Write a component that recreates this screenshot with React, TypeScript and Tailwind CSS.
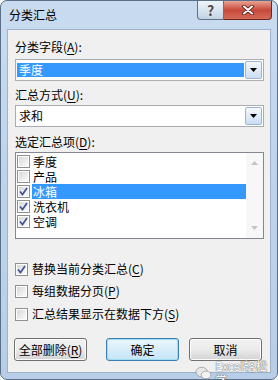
import React from 'react';

const font = "font-['Noto_Sans_CJK_SC',sans-serif]";

function U({ children }: { children: React.ReactNode }) {
  return <span className="underline underline-offset-2">{children}</span>;
}

function CheckBox({ checked }: { checked?: boolean }) {
  return (
    <div className="w-[13px] h-[13px] border border-[#8e8f8f] bg-white p-[1px] flex-shrink-0">
      <div className="w-full h-full bg-gradient-to-br from-[#d8d8d8] to-[#fbfbfb] flex items-center justify-center">
        {checked && (
          <svg width="9" height="9" viewBox="0 0 9 9">
            <path d="M1 4.5 L3.5 7.5 L8 1" fill="none" stroke="#3f5795" strokeWidth="1.7" />
          </svg>
        )}
      </div>
    </div>
  );
}

function DropButton() {
  return (
    <div className="w-[17px] h-full border border-[#9fb4cf] rounded-[2px] bg-gradient-to-b from-[#f4f8fc] to-[#c9def3] flex items-center justify-center">
      <svg width="7" height="4" viewBox="0 0 7 4">
        <path d="M0 0 H7 L3.5 4 Z" fill="#000" />
      </svg>
    </div>
  );
}

function Combo({ value, selected }: { value: string; selected?: boolean }) {
  return (
    <div className="h-[22px] border border-[#abadb3] bg-white flex items-stretch p-[1px]">
      <div className="flex-1 flex items-center pr-[1px] py-[2px]">
        <div className={`w-full h-full flex items-center pl-[2px] ${selected ? 'bg-[#3399ff] text-white' : 'text-black'}`}>
          {value}
        </div>
      </div>
      <DropButton />
    </div>
  );
}

const items = [
  { label: '季度', checked: false },
  { label: '产品', checked: false },
  { label: '冰箱', checked: true, active: true },
  { label: '洗衣机', checked: true },
  { label: '空调', checked: true },
];

function Btn({ children, focused }: { children: React.ReactNode; focused?: boolean }) {
  return (
    <div
      className={`w-[73px] h-[23px] rounded-[3px] border flex items-center justify-center ${
        focused
          ? 'border-[#3c7fb1] bg-gradient-to-b from-[#eaf6fd] to-[#c6e4f6] shadow-[inset_0_0_0_1px_#9fdcf8]'
          : 'border-[#707070] bg-gradient-to-b from-[#f2f2f2] via-[#ebebeb] to-[#d3d3d3] shadow-[inset_0_0_0_1px_#fcfcfc]'
      }`}
    >
      {children}
    </div>
  );
}

export default function App() {
  return (
    <div className={`w-[278px] h-[380px] bg-white ${font} text-[12px] leading-[16px] text-black`}>
      <div className="relative w-full h-full rounded-[7px] border border-[#5b6f88] bg-gradient-to-b from-[#c9dbef] via-[#bed3eb] to-[#b8cee8] flex flex-col px-[6px] pb-[6px]">
        {/* title bar */}
        <div className="h-[28px] flex items-start flex-shrink-0">
          <div className="pl-[2px] pt-[6px] text-[12px] text-black">分类汇总</div>
          <div className="ml-auto flex mr-[-1px]">
            <div className="w-[27px] h-[19px] border border-[#5e728c] border-t-0 rounded-bl-[4px] bg-gradient-to-b from-[#eef3f9] via-[#d9e4f0] to-[#c2d2e4] flex items-center justify-center">
              <span className="text-[14px] font-bold text-[#4a4a4a] leading-none [text-shadow:0_0_2px_#fff]">?</span>
            </div>
            <div className="w-[48px] h-[19px] border border-[#6e2620] border-t-0 border-l-0 rounded-br-[4px] bg-gradient-to-b from-[#e6a394] via-[#c8483a] to-[#d36a58] flex items-center justify-center">
              <svg width="12" height="10" viewBox="0 0 12 10">
                <path d="M2 1.5 L10 8.5 M10 1.5 L2 8.5" stroke="#4a1510" strokeWidth="3.6" strokeLinecap="round" />
                <path d="M2 1.5 L10 8.5 M10 1.5 L2 8.5" stroke="#fff" strokeWidth="2" strokeLinecap="round" />
              </svg>
            </div>
          </div>
        </div>

        {/* client area */}
        <div className="flex-1 border border-[#9eb2ca] bg-[#f0f0f0] pl-[7px] pr-[6px] pt-[9px] flex flex-col">
          <div>
            分类字段(<U>A</U>):
          </div>
          <div className="mt-[4px]">
            <Combo value="季度" selected />
          </div>

          <div className="mt-[6px]">
            汇总方式(<U>U</U>):
          </div>
          <div className="mt-[2px]">
            <Combo value="求和" />
          </div>

          <div className="mt-[7px]">
            选定汇总项(<U>D</U>):
          </div>
          <div className="mt-[2px] h-[87px] border border-[#828790] bg-white flex">
            <div className="flex-1 pt-[1px] pl-[1px]">
              {items.map(it => (
                <div key={it.label} className="h-[15px] leading-[15px] flex items-center">
                  <CheckBox checked={it.checked} />
                  <div className={`ml-[2px] flex-1 h-full flex items-center pl-[1px] ${it.active ? 'bg-[#3399ff] text-white' : ''}`}>
                    {it.label}
                  </div>
                </div>
              ))}
            </div>
            <div className="w-[17px] bg-[#f7f7f7] flex flex-col items-center justify-between py-[8px]">
              <svg width="7" height="4" viewBox="0 0 7 4">
                <path d="M0 4 H7 L3.5 0 Z" fill="#c4c4c4" />
              </svg>
              <svg width="7" height="4" viewBox="0 0 7 4">
                <path d="M0 0 H7 L3.5 4 Z" fill="#c4c4c4" />
              </svg>
            </div>
          </div>

          <div className="mt-[22px] flex items-center gap-[4px]">
            <CheckBox checked />
            <span>
              替换当前分类汇总(<U>C</U>)
            </span>
          </div>
          <div className="mt-[6px] flex items-center gap-[4px]">
            <CheckBox />
            <span>
              每组数据分页(<U>P</U>)
            </span>
          </div>
          <div className="mt-[7px] flex items-center gap-[4px]">
            <CheckBox />
            <span>
              汇总结果显示在数据下方(<U>S</U>)
            </span>
          </div>

          <div className="mt-[16px] ml-[-1px] flex">
            <Btn>
              <span>
                全部删除(<U>R</U>)
              </span>
            </Btn>
            <div className="ml-[19px]">
              <Btn focused>确定</Btn>
            </div>
            <div className="ml-[10px]">
              <Btn>取消</Btn>
            </div>
          </div>
        </div>

        {/* watermark */}
        <div className="absolute left-[194px] top-[358px] flex items-center gap-[3px]">
          <svg width="18" height="14" viewBox="0 0 18 14">
            <ellipse cx="7" cy="6" rx="6" ry="5" fill="#e8e8e8" stroke="#9a9a9a" strokeWidth="0.8" />
            <ellipse cx="11.5" cy="9" rx="5" ry="4" fill="#f4f4f4" stroke="#9a9a9a" strokeWidth="0.8" />
          </svg>
          <span className="text-[12px] leading-[14px] text-white [text-shadow:0_0_1px_#555,0_0_1px_#555]">
            Excel轻松学
          </span>
        </div>
      </div>
    </div>
  );
}
